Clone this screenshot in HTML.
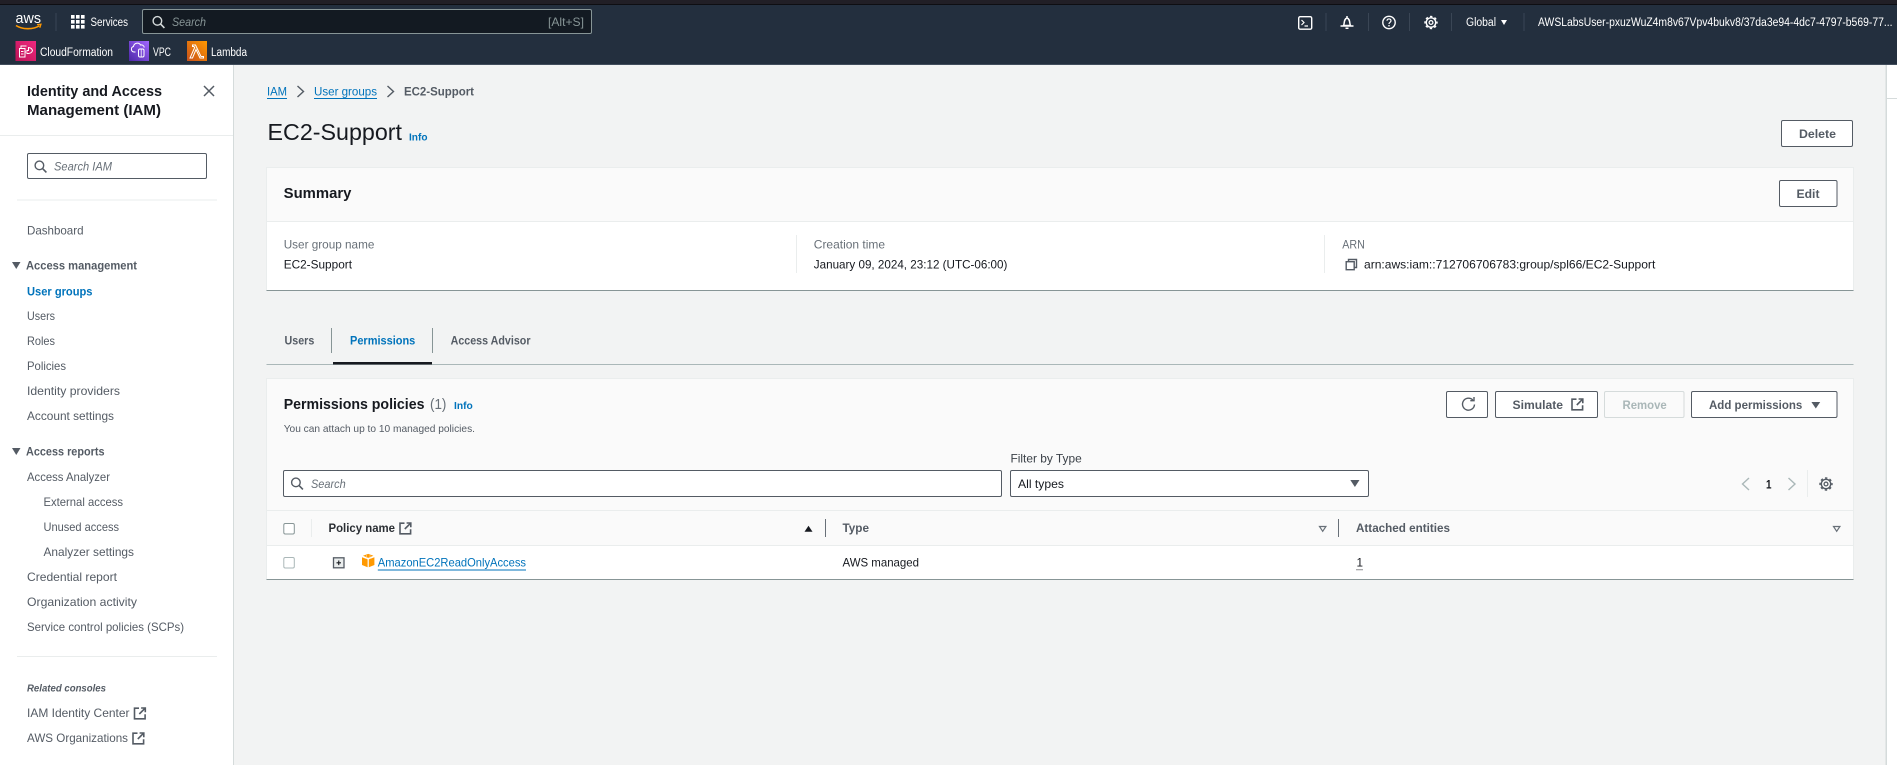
<!DOCTYPE html>
<html lang="en"><head><meta charset="utf-8"><title>EC2-Support | IAM</title>
<style>
html,body{margin:0;padding:0;width:1897px;height:765px;overflow:hidden;background:#f2f3f3}
svg{display:block;filter:blur(.3px)}
text{font-family:"Liberation Sans",sans-serif;font-size:12px;fill:#545b64}
.w{fill:#fff}.d{fill:#16191f}.g{fill:#687078}.b{font-weight:700}.l{fill:#0073bb}
.i{font-style:italic}.s{fill:none;stroke:#545b64;stroke-width:1.4}
.tw{fill:none;stroke:#fff;stroke-width:1.4}
</style></head><body>
<svg width="1897" height="765" viewBox="0 0 1897 765" xmlns="http://www.w3.org/2000/svg">
<defs>
<linearGradient id="cf" x1="0" y1="1" x2="1" y2="0"><stop offset="0" stop-color="#bc1356"/><stop offset="1" stop-color="#f0287f"/></linearGradient>
<linearGradient id="vp" x1="0" y1="1" x2="1" y2="0"><stop offset="0" stop-color="#4d27a8"/><stop offset="1" stop-color="#a166ff"/></linearGradient>
<linearGradient id="la" x1="0" y1="1" x2="1" y2="0"><stop offset="0" stop-color="#c8511b"/><stop offset="1" stop-color="#ff9900"/></linearGradient>
<g id="ext"><path d="M5.5 1.200H1v10.600h10.600V7.300M7.600 1h4.200v4.200M11.500 1.300L5.800 7" fill="none" stroke="#545b64" stroke-width="1.600"/></g>
<g id="mag"><circle cx="5.400" cy="5.400" r="4.300" fill="none" stroke-width="1.400"/><path d="M8.600 8.600L12.400 12.400" fill="none" stroke-width="1.600"/></g>
<g id="gear"><circle cx="7" cy="7" r="4.700" fill="none" stroke-width="1.400"/><circle cx="7" cy="7" r="1.900" fill="none" stroke-width="1.300"/><circle cx="7" cy="7" r="6" fill="none" stroke-width="1.400" stroke-dasharray="2.400 2.312" stroke-dashoffset="1.200"/></g>
</defs>

<!-- page backgrounds -->
<rect width="1897" height="765" fill="#f2f3f3"/>
<rect x="1887" y="65" width="10" height="700" fill="#fff"/>
<rect x="1885.500" y="65" width="1.500" height="700" fill="#d5dbdb"/>
<rect x="1887" y="98" width="10" height="1" fill="#d5dbdb"/>

<!-- header -->
<rect width="1897" height="65" fill="#232f3e"/>
<rect width="1897" height="4" fill="#211f26"/>
<rect y="4" width="1897" height="1" fill="#0e0e12"/>
<rect y="64" width="1897" height="1" fill="#414d5c"/>

<text x="15.500" y="23" class="w" style="font-size:14.500px" textLength="25.500" lengthAdjust="spacingAndGlyphs">aws</text>
<path d="M16 25.500C22 29.500 33 30 39.500 25.600" fill="none" stroke="#f90" stroke-width="1.600"/>
<path d="M37 24.600l4-.4-1.200 3.600" fill="none" stroke="#f90" stroke-width="1.200"/>
<rect x="55.500" y="13" width="1" height="18" fill="#3a4655"/>
<g fill="#fff">
<rect x="71" y="15" width="3.600" height="3.600"/><rect x="76" y="15" width="3.600" height="3.600"/><rect x="81" y="15" width="3.600" height="3.600"/>
<rect x="71" y="20" width="3.600" height="3.600"/><rect x="76" y="20" width="3.600" height="3.600"/><rect x="81" y="20" width="3.600" height="3.600"/>
<rect x="71" y="25" width="3.600" height="3.600"/><rect x="76" y="25" width="3.600" height="3.600"/><rect x="81" y="25" width="3.600" height="3.600"/>
</g>
<text x="90.500" y="26" class="w" style="font-size:11.500px" textLength="37.500" lengthAdjust="spacingAndGlyphs">Services</text>
<rect x="142.500" y="9.500" width="449" height="24" rx="1.500" fill="#131a22" stroke="#879596"/>
<use href="#mag" x="152" y="15.500" stroke="#d5dbdb"/>
<text x="172" y="26" class="i" style="font-size:12px;fill:#879596" textLength="34" lengthAdjust="spacingAndGlyphs">Search</text>
<text x="548" y="26" style="font-size:12px;fill:#879596" textLength="36" lengthAdjust="spacingAndGlyphs">[Alt+S]</text>

<rect x="15.500" y="41" width="20.500" height="20" fill="url(#cf)"/>
<path d="M19.500 48.500h5.500v8.500h-5.500zM21 51.500h2.500M21 54h2.500M25 52h2.500M21 48.500v-2.500h5.500M26.500 50.500h2v-3c2 .2 3.500 1.200 4 3c-.5 1.800-2 2.800-4 3h-2" fill="none" stroke="#fff" stroke-width="1"/>
<text x="40" y="56" class="w" style="font-size:11.500px" textLength="73" lengthAdjust="spacingAndGlyphs">CloudFormation</text>
<rect x="129" y="41" width="20" height="20" fill="url(#vp)"/>
<path d="M135.500 52h-1.500a2.800 2.800 0 0 1-.5-5.500a3.800 3.800 0 0 1 7-1.500a3 3 0 0 1 3.800 2.500" fill="none" stroke="#fff" stroke-width="1"/>
<rect x="138.500" y="49" width="5.500" height="8" rx="1.500" fill="none" stroke="#fff" stroke-width="1"/>
<path d="M141.200 49v8" stroke="#fff" stroke-width=".8"/>
<text x="153" y="56" class="w" style="font-size:11.500px" textLength="18" lengthAdjust="spacingAndGlyphs">VPC</text>
<rect x="187" y="41" width="20" height="20" fill="url(#la)"/>
<path d="M192.500 45h3l5.500 11.500h2.500v1.500h-3.500l-4-8.500-3.500 8.500h-2.500l4.700-10.500-.9-1h-1.300z" fill="none" stroke="#fff" stroke-width="1"/>
<text x="211" y="56" class="w" style="font-size:11.500px" textLength="36" lengthAdjust="spacingAndGlyphs">Lambda</text>

<rect x="1298.700" y="16.700" width="13" height="12.500" rx="1.500" class="tw"/>
<path d="M1301.500 20l2.500 2.500-2.500 2.500M1304.500 26h3.500" fill="none" stroke="#fff" stroke-width="1.200"/>
<rect x="1325.500" y="13" width="1" height="18" fill="#3a4655"/>
<path d="M1347 16v1.500M1343.500 25.500c1.200-1.500 0-6.500 3.500-7.500c3.500 1 2.300 6 3.500 7.500zM1340.500 26h13M1345.500 28.200h3" fill="none" stroke="#fff" stroke-width="1.500"/>
<rect x="1368" y="13" width="1" height="18" fill="#3a4655"/>
<circle cx="1389" cy="22.500" r="6.200" class="tw"/>
<path d="M1387 20.800c0-2.500 4-2.500 4 0c0 1.500-2 1.500-2 3.200" fill="none" stroke="#fff" stroke-width="1.200"/>
<rect x="1388.300" y="25" width="1.400" height="1.400" fill="#fff"/>
<rect x="1409" y="13" width="1" height="18" fill="#3a4655"/>
<use href="#gear" x="1424" y="15.500" stroke="#fff"/>
<rect x="1451" y="13" width="1" height="18" fill="#3a4655"/>
<text x="1466" y="26" class="w" style="font-size:11.500px" textLength="30" lengthAdjust="spacingAndGlyphs">Global</text>
<path d="M1501 20h6l-3 5z" fill="#fff"/>
<rect x="1523.500" y="13" width="1" height="18" fill="#3a4655"/>
<text x="1538" y="26" class="w" style="font-size:11.500px" textLength="354.500" lengthAdjust="spacingAndGlyphs">AWSLabsUser-pxuzWuZ4m8v67Vpv4bukv8/37da3e94-4dc7-4797-b569-77...</text>

<!-- sidebar -->
<rect y="65" width="233" height="700" fill="#fff"/>
<rect x="233" y="65" width="1" height="700" fill="#d5dbdb"/>
<text x="27" y="96" class="d b" style="font-size:14.500px" textLength="135" lengthAdjust="spacingAndGlyphs">Identity and Access</text>
<text x="27" y="115" class="d b" style="font-size:14.500px" textLength="134" lengthAdjust="spacingAndGlyphs">Management (IAM)</text>
<path d="M204 86l10 10M214 86l-10 10" fill="none" stroke="#545b64" stroke-width="1.500"/>
<rect y="135" width="233" height="1" fill="#eaeded"/>
<rect x="27.500" y="153.500" width="179" height="25" rx="1.500" fill="#fff" stroke="#545b64"/>
<use href="#mag" x="34" y="160" stroke="#545b64"/>
<text x="54" y="170.500" class="i g" style="font-size:12px" textLength="58" lengthAdjust="spacingAndGlyphs">Search IAM</text>
<rect x="17" y="199.500" width="200" height="1" fill="#eaeded"/>

<text x="27" y="234.500" textLength="56.500" lengthAdjust="spacingAndGlyphs">Dashboard</text>
<path d="M12 262h8.500l-4.250 7z" fill="#545b64"/>
<text x="26" y="269.500" class="b" textLength="111" lengthAdjust="spacingAndGlyphs">Access management</text>
<text x="27" y="295.500" class="b l" textLength="65.500" lengthAdjust="spacingAndGlyphs">User groups</text>
<text x="27" y="320" textLength="28" lengthAdjust="spacingAndGlyphs">Users</text>
<text x="27" y="345" textLength="28" lengthAdjust="spacingAndGlyphs">Roles</text>
<text x="27" y="370" textLength="39" lengthAdjust="spacingAndGlyphs">Policies</text>
<text x="27" y="395" textLength="93" lengthAdjust="spacingAndGlyphs">Identity providers</text>
<text x="27" y="420" textLength="87" lengthAdjust="spacingAndGlyphs">Account settings</text>
<path d="M12 448h8.500l-4.250 7z" fill="#545b64"/>
<text x="26" y="455.500" class="b" textLength="78.500" lengthAdjust="spacingAndGlyphs">Access reports</text>
<text x="27" y="481" textLength="83" lengthAdjust="spacingAndGlyphs">Access Analyzer</text>
<text x="43.500" y="506" textLength="79.500" lengthAdjust="spacingAndGlyphs">External access</text>
<text x="43.500" y="531" textLength="75.500" lengthAdjust="spacingAndGlyphs">Unused access</text>
<text x="43.500" y="556" textLength="90.500" lengthAdjust="spacingAndGlyphs">Analyzer settings</text>
<text x="27" y="581" textLength="90" lengthAdjust="spacingAndGlyphs">Credential report</text>
<text x="27" y="606" textLength="110" lengthAdjust="spacingAndGlyphs">Organization activity</text>
<text x="27" y="631" textLength="157" lengthAdjust="spacingAndGlyphs">Service control policies (SCPs)</text>
<rect x="17" y="656" width="200" height="1" fill="#eaeded"/>
<text x="27" y="691.500" class="b i" style="font-size:10.500px" textLength="79" lengthAdjust="spacingAndGlyphs">Related consoles</text>
<text x="27" y="717" textLength="102.500" lengthAdjust="spacingAndGlyphs">IAM Identity Center</text>
<use href="#ext" x="133.500" y="707"/>
<text x="27" y="742" textLength="101" lengthAdjust="spacingAndGlyphs">AWS Organizations</text>
<use href="#ext" x="132" y="732"/>

<!-- breadcrumb -->
<text x="267" y="95.500" class="l" textLength="20" lengthAdjust="spacingAndGlyphs">IAM</text>
<rect x="267" y="98" width="20" height="1" fill="#0073bb"/>
<path d="M297.500 86l6 5.500-6 5.500" class="s"/>
<text x="314" y="95.500" class="l" textLength="63" lengthAdjust="spacingAndGlyphs">User groups</text>
<rect x="314" y="98" width="63" height="1" fill="#0073bb"/>
<path d="M387.500 86l6 5.500-6 5.500" class="s"/>
<text x="404" y="95.500" class="b" textLength="70" lengthAdjust="spacingAndGlyphs">EC2-Support</text>

<!-- page title -->
<text x="267.500" y="140" class="d" style="font-size:23.500px" textLength="134.500" lengthAdjust="spacingAndGlyphs">EC2-Support</text>
<text x="409" y="140.500" class="l b" style="font-size:10.500px" textLength="18.500" lengthAdjust="spacingAndGlyphs">Info</text>
<rect x="1781.500" y="120.500" width="71" height="26" rx="1.500" fill="#fff" stroke="#545b64"/>
<text x="1799" y="138" class="b" textLength="37" lengthAdjust="spacingAndGlyphs">Delete</text>

<!-- summary card -->
<rect x="266.500" y="167.500" width="1587" height="123" fill="#fff" stroke="#eaeded"/>
<rect x="267" y="168" width="1586" height="53" fill="#fafafa"/>
<rect x="267" y="221" width="1586" height="1" fill="#eaeded"/>
<rect x="266.500" y="290" width="1587" height="1" fill="#879596"/>
<text x="283.700" y="198" class="d b" style="font-size:14.500px" textLength="67.700" lengthAdjust="spacingAndGlyphs">Summary</text>
<rect x="1779.500" y="180.500" width="57.500" height="26" rx="1.500" fill="#fff" stroke="#545b64"/>
<text x="1796.500" y="198" class="b" textLength="23" lengthAdjust="spacingAndGlyphs">Edit</text>
<text x="283.700" y="248.500" class="g" textLength="90.700" lengthAdjust="spacingAndGlyphs">User group name</text>
<text x="283.700" y="268.500" class="d" textLength="68.300" lengthAdjust="spacingAndGlyphs">EC2-Support</text>
<rect x="796" y="235" width="1" height="38" fill="#eaeded"/>
<text x="813.800" y="248.500" class="g" textLength="71.200" lengthAdjust="spacingAndGlyphs">Creation time</text>
<text x="813.800" y="268.500" class="d" textLength="193.600" lengthAdjust="spacingAndGlyphs">January 09, 2024, 23:12 (UTC-06:00)</text>
<rect x="1324" y="235" width="1" height="38" fill="#eaeded"/>
<text x="1342.300" y="248.500" class="g" textLength="22.600" lengthAdjust="spacingAndGlyphs">ARN</text>
<path d="M1348.500 261.500v-2h8v8h-2" class="s"/>
<rect x="1346.200" y="261.700" width="8" height="8" fill="none" stroke="#545b64" stroke-width="1.400"/>
<text x="1364" y="268.500" class="d" textLength="291.300" lengthAdjust="spacingAndGlyphs">arn:aws:iam::712706706783:group/spl66/EC2-Support</text>

<!-- tabs -->
<text x="284.500" y="344.500" class="b" textLength="29.800" lengthAdjust="spacingAndGlyphs">Users</text>
<rect x="331" y="328" width="1" height="25" fill="#879596"/>
<text x="350" y="344.500" class="b l" textLength="65.300" lengthAdjust="spacingAndGlyphs">Permissions</text>
<rect x="432" y="328" width="1" height="25" fill="#879596"/>
<text x="450.600" y="344.500" class="b" textLength="79.900" lengthAdjust="spacingAndGlyphs">Access Advisor</text>
<rect x="266.500" y="364" width="1587" height="1" fill="#aab7b8"/>
<rect x="333" y="362" width="99" height="2.500" fill="#16191f"/>

<!-- permissions card -->
<rect x="266.500" y="378.500" width="1587" height="201" fill="#fafafa" stroke="#eaeded"/>
<text x="283.700" y="409" class="d b" style="font-size:14.500px" textLength="140.800" lengthAdjust="spacingAndGlyphs">Permissions policies</text>
<text x="430" y="409" class="g" style="font-size:14.500px" textLength="16.400" lengthAdjust="spacingAndGlyphs">(1)</text>
<text x="454" y="409" class="l b" style="font-size:10.500px" textLength="18.800" lengthAdjust="spacingAndGlyphs">Info</text>
<text x="283.700" y="432" style="font-size:10.500px" textLength="191.300" lengthAdjust="spacingAndGlyphs">You can attach up to 10 managed policies.</text>

<rect x="1446.500" y="391.500" width="41" height="26" rx="1.500" fill="#fff" stroke="#545b64"/>
<path d="M1472.800 400a6 6 0 1 0 1.700 4.500M1474 397v3.700h-3.700" fill="none" stroke="#545b64" stroke-width="1.400"/>
<rect x="1495.500" y="391.500" width="102" height="26" rx="1.500" fill="#fff" stroke="#545b64"/>
<text x="1512.500" y="409" class="b" textLength="50.500" lengthAdjust="spacingAndGlyphs">Simulate</text>
<use href="#ext" x="1571" y="398"/>
<rect x="1604.500" y="391.500" width="79.500" height="26" rx="1.500" fill="#fafafa" stroke="#d5dbdb"/>
<text x="1622.500" y="409" class="b" style="fill:#aab7b8" textLength="44.200" lengthAdjust="spacingAndGlyphs">Remove</text>
<rect x="1691.500" y="391.500" width="145.500" height="26" rx="1.500" fill="#fff" stroke="#545b64"/>
<text x="1709" y="409" class="b" textLength="93.300" lengthAdjust="spacingAndGlyphs">Add permissions</text>
<path d="M1811.400 402h8.800l-4.400 6.500z" fill="#545b64"/>

<text x="1010.500" y="462.500" style="fill:#3b4148" textLength="71.200" lengthAdjust="spacingAndGlyphs">Filter by Type</text>
<rect x="283.500" y="470.500" width="718" height="26" rx="1.500" fill="#fff" stroke="#545b64"/>
<use href="#mag" x="290.500" y="477" stroke="#545b64"/>
<text x="311" y="488" class="i g" textLength="34.700" lengthAdjust="spacingAndGlyphs">Search</text>
<rect x="1010.500" y="470.500" width="358" height="26" rx="1.500" fill="#fff" stroke="#545b64"/>
<text x="1018" y="488" class="d" textLength="46" lengthAdjust="spacingAndGlyphs">All types</text>
<path d="M1350.300 480h9.200l-4.600 7z" fill="#545b64"/>

<path d="M1749 478l-6.500 6 6.500 6" fill="none" stroke="#aab7b8" stroke-width="1.400"/>
<text x="1766" y="488.500" class="d b" textLength="5.500" lengthAdjust="spacingAndGlyphs">1</text>
<path d="M1788.500 478l6.500 6-6.500 6" fill="none" stroke="#aab7b8" stroke-width="1.400"/>
<rect x="1807" y="470" width="1" height="27" fill="#eaeded"/>
<use href="#gear" x="1819" y="477" stroke="#545b64"/>

<!-- table -->
<rect x="267" y="510" width="1586" height="1" fill="#eaeded"/>
<rect x="267" y="545" width="1586" height="1" fill="#eaeded"/>
<rect x="267" y="546" width="1586" height="33" fill="#fff"/>
<rect x="266.500" y="579" width="1587" height="1" fill="#879596"/>
<rect x="283.800" y="523.500" width="10.500" height="10.500" rx="1.500" fill="#fff" stroke="#879596"/>
<rect x="311" y="519" width="1" height="18" fill="#eaeded"/>
<text x="328.500" y="532" class="b d" style="fill:#2a2e33" textLength="66.500" lengthAdjust="spacingAndGlyphs">Policy name</text>
<use href="#ext" x="399" y="522"/>
<path d="M804.500 531.800h8l-4-6z" fill="#16191f"/>
<rect x="825" y="519" width="1" height="18" fill="#687078"/>
<text x="842.500" y="532" class="b" textLength="26.500" lengthAdjust="spacingAndGlyphs">Type</text>
<path d="M1319.500 526.500h6.400l-3.200 4.800z" fill="none" stroke="#687078" stroke-width="1.200"/>
<rect x="1338" y="519" width="1" height="18" fill="#687078"/>
<text x="1356" y="532" class="b" textLength="94" lengthAdjust="spacingAndGlyphs">Attached entities</text>
<path d="M1833.500 526.500h6.400l-3.200 4.800z" fill="none" stroke="#687078" stroke-width="1.200"/>

<rect x="283.800" y="557.500" width="10.500" height="10.500" rx="1.500" fill="#fff" stroke="#aab7b8"/>
<rect x="333.500" y="557.800" width="10.500" height="10" fill="#eaeded" stroke="#545b64" stroke-width="1.300"/>
<path d="M336.500 562.800h4.500M338.750 560.500v4.600" fill="none" stroke="#16191f" stroke-width="1.100"/>
<path d="M362 557.200l5.600 2.200v7.800l-5.600-2.200zM374.400 557.200l-5.600 2.200v7.800l5.600-2.200zM363 555.800l5.200-1.900 5.200 1.900-5.200 2.100z" fill="#f90"/>
<path d="M366.500 555v3.500M370 555v3.500" stroke="#ffd9a0" stroke-width=".6"/>
<text x="377.800" y="566.500" class="l" textLength="148.200" lengthAdjust="spacingAndGlyphs">AmazonEC2ReadOnlyAccess</text>
<rect x="377.800" y="569.500" width="148.200" height="1" fill="#0073bb"/>
<text x="842.500" y="566.500" class="d" textLength="76.500" lengthAdjust="spacingAndGlyphs">AWS managed</text>
<text x="1356.500" y="566.500" class="d" textLength="6.500" lengthAdjust="spacingAndGlyphs">1</text>
<path d="M1356.500 569.700h6.500" stroke="#16191f" stroke-width="1" stroke-dasharray="1 1"/>
</svg>
</body></html>
